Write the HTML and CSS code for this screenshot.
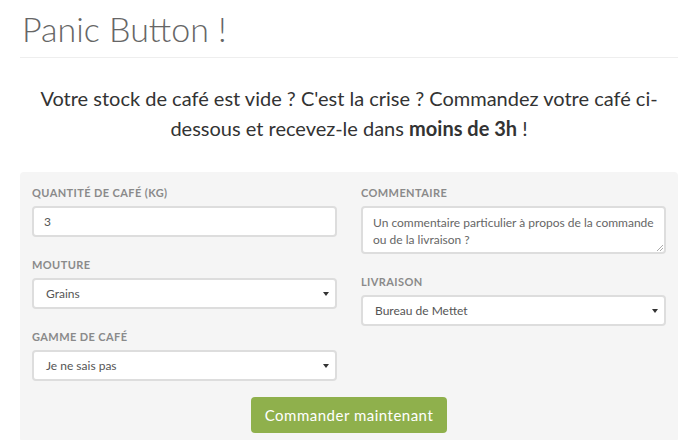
FILE: index.html
```html
<!DOCTYPE html>
<html lang="fr">
<head>
<meta charset="utf-8">
<link rel="stylesheet" href="styles.css">
</head>
<body>
<div class="page">
  <h1 class="title">Panic Button !</h1>
  <hr class="rule">
  <p class="intro">Votre stock de café est vide ? C'est la crise ? Commandez votre café ci-dessous et recevez-le dans <strong>moins de 3h</strong> !</p>
  <form class="panel">
    <div class="cols">
      <div class="col">
        <label class="field">
          <span class="label">Quantité de café (kg)</span>
          <span class="control">3</span>
        </label>
        <label class="field">
          <span class="label">Mouture</span>
          <span class="control select">Grains<span class="caret"></span></span>
        </label>
        <label class="field">
          <span class="label">Gamme de café</span>
          <span class="control select">Je ne sais pas<span class="caret"></span></span>
        </label>
      </div>
      <div class="col">
        <label class="field">
          <span class="label">Commentaire</span>
          <span class="control textarea">Un commentaire particulier à propos de la commande ou de la livraison ?<span class="grip"></span></span>
        </label>
        <label class="field">
          <span class="label">Livraison</span>
          <span class="control select">Bureau de Mettet<span class="caret"></span></span>
        </label>
      </div>
    </div>
    <div class="actions">
      <button type="button" class="btn">Commander maintenant</button>
    </div>
  </form>
</div>
</body>
</html>
```
FILE: styles.css
```css
html, body {
  margin: 0;
  padding: 0;
  background: #fff;
}
body {
  font-family: "Lato", "Open Sans", sans-serif;
  color: #333;
}
.page {
  padding: 0 17px 0 20px;
}
.title {
  margin: 0;
  padding: 9px 0 0 2px;
  font-family: "Lato", sans-serif;
  font-weight: 300;
  font-size: 34px;
  line-height: 40px;
  color: #666;
  letter-spacing: 0;
}
.rule {
  margin: 8px 0 0 0;
  border: 0;
  border-top: 1px solid #eee;
  height: 0;
}
.intro {
  margin: 25px auto 0 auto;
  width: 632px;
  text-align: center;
  font-size: 20px;
  line-height: 30px;
  color: #333;
}
.intro strong {
  font-weight: 700;
}
.panel {
  margin-top: 29px;
  background: #f5f5f5;
  border-radius: 4px;
  padding: 14px 12px 8px 12px;
  height: 270px;
  box-sizing: border-box;
}
.cols {
  display: flex;
  gap: 24px;
}
.col {
  flex: 1;
  display: flex;
  flex-direction: column;
  gap: 21px;
}
.field {
  display: flex;
  flex-direction: column;
  gap: 6px;
}
.label {
  text-transform: uppercase;
  font-size: 11px;
  font-weight: 700;
  letter-spacing: 0.4px;
  color: #8a8a8a;
  line-height: 14px;
}
.control {
  position: relative;
  display: block;
  box-sizing: border-box;
  height: 31px;
  background: #fff;
  border: 2px solid #ddd;
  border-radius: 4px;
  padding: 6px 10px;
  font-size: 12px;
  line-height: 15px;
  color: #555;
}
.select {
  padding-left: 12px;
}
.caret {
  position: absolute;
  right: 6px;
  top: 12px;
  width: 0;
  height: 0;
  border-left: 3px solid transparent;
  border-right: 3px solid transparent;
  border-top: 4px solid #333;
}
.textarea {
  height: 48px;
  padding: 6px 10px;
  line-height: 17px;
  color: #666;
}
.grip {
  position: absolute;
  right: 1px;
  bottom: 1px;
  width: 6px;
  height: 6px;
  background: linear-gradient(135deg, transparent 45%, #aaa 45%, #aaa 55%, transparent 55%, transparent 70%, #aaa 70%, #aaa 80%, transparent 80%);
}
.actions {
  display: flex;
  justify-content: center;
  margin-top: 16px;
}
.btn {
  background: #8fb04c;
  color: #fff;
  border: 0;
  border-radius: 4px;
  width: 196px;
  height: 36px;
  font-family: "Lato", sans-serif;
  font-size: 15px;
  letter-spacing: 0.5px;
  padding: 0;
}
```
